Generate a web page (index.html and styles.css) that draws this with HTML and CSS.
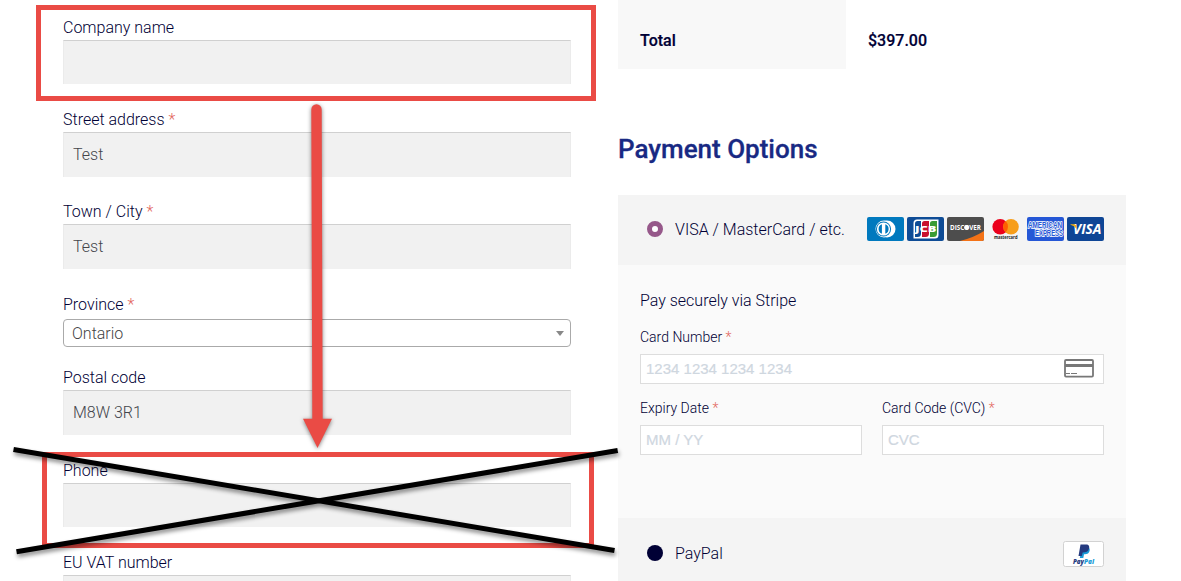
FILE: index.html
```html
<!DOCTYPE html>
<html lang="en">
<head>
<meta charset="utf-8">
<title>Checkout</title>
<link rel="stylesheet" href="styles.css">
</head>
<body>
<main class="checkout">
  <form class="billing">
    <div class="field field--company"><label class="label">Company name</label><input class="input input--short" type="text"></div>
    <div class="field field--street"><label class="label">Street address <span class="req">*</span></label><input class="input" type="text" value="Test"></div>
    <div class="field field--city"><label class="label">Town / City <span class="req">*</span></label><input class="input" type="text" value="Test"></div>
    <div class="field field--province"><label class="label">Province <span class="req">*</span></label><div class="select"><span class="select-value">Ontario</span><i class="select-arrow"></i></div></div>
    <div class="field field--postal"><label class="label">Postal code</label><input class="input" type="text" value="M8W 3R1"></div>
    <div class="field field--phone"><label class="label">Phone</label><input class="input input--short" type="text"></div>
    <div class="field"><label class="label">EU VAT number</label><input class="input" type="text"></div>
  </form>

  <section class="order">
    <div class="total"><div class="total-name">Total</div><div class="total-value">$397.00</div></div>
    <h2 class="heading">Payment Options</h2>
    <div class="method method--card">
      <span class="radio radio--on"></span><span class="method-name">VISA / MasterCard / etc.</span>
      <div class="cards">
        <svg class="card" viewBox="0 0 37 24"><rect width="37" height="24" rx="2" fill="#0079be"/><circle cx="20" cy="12" r="8.500" fill="#fff"/><circle cx="17" cy="12" r="8.500" fill="#fff"/><circle cx="16.500" cy="12" r="7.600" fill="#0079be"/><circle cx="16.500" cy="12" r="6.600" fill="#fff"/><path d="M14.900 7.300a5 5 0 0 0 0 9.400zM18.300 7.300a5 5 0 0 1 0 9.400z" fill="#0079be"/></svg>
        <svg class="card" viewBox="0 0 37 24"><rect width="37" height="24" rx="2" fill="#0e4c96"/><path d="M10 2.500h21.500V18a3.500 3.500 0 0 1-3.500 3.500H6.500V6A3.500 3.500 0 0 1 10 2.500z" fill="#fff"/><path d="M10.500 4h3.500v12.500a3.500 3.500 0 0 1-3.500 3.500H8V6.500A2.500 2.500 0 0 1 10.500 4z" fill="#0e4c96"/><path d="M17.500 4H22v12.500a3.500 3.500 0 0 1-3.500 3.500H15V6.500A2.500 2.500 0 0 1 17.500 4z" fill="#c8102e"/><path d="M25.500 4H30v12.500a3.500 3.500 0 0 1-3.500 3.500H23V6.500A2.500 2.500 0 0 1 25.500 4z" fill="#3a9b35"/><text class="logo" x="8" y="15.300" font-size="9" textLength="21.500" lengthAdjust="spacingAndGlyphs" fill="#fff">JCB</text></svg>
        <svg class="card" viewBox="0 0 37 24"><rect width="37" height="24" rx="2" fill="#4d4d4d"/><path d="M37 14v8a2 2 0 0 1-2 2H13Q27 20.500 37 14z" fill="#f47216"/><text class="logo logo--thin" x="3" y="12.600" font-size="6.200" textLength="31" lengthAdjust="spacingAndGlyphs" fill="#fff">DISCOVER</text><circle cx="19.600" cy="10.400" r="2.400" fill="#fff"/></svg>
        <svg class="card" viewBox="0 0 37 24"><circle cx="13.200" cy="9.700" r="7.800" fill="#eb001b"/><circle cx="24" cy="9.700" r="7.800" fill="#f79e1b"/><path d="M18.600 4.100a7.800 7.800 0 0 1 0 11.200a7.800 7.800 0 0 1 0-11.200z" fill="#ff5f00"/><text class="logo logo--thin" x="7" y="21.800" font-size="4.700" textLength="23.500" lengthAdjust="spacingAndGlyphs" fill="#222">mastercard</text></svg>
        <svg class="card" viewBox="0 0 37 24"><rect width="37" height="24" rx="2" fill="#2557d6"/><g class="amex"><text x="1" y="10.700" textLength="34" lengthAdjust="spacingAndGlyphs">AMERICAN</text><text x="8" y="18.700" textLength="28" lengthAdjust="spacingAndGlyphs">EXPRESS</text></g></svg>
        <svg class="card" viewBox="0 0 37 24"><rect width="37" height="24" rx="2" fill="#0e4595"/><text class="logo logo--thin" x="6" y="17" font-size="14" font-style="italic" textLength="28.500" lengthAdjust="spacingAndGlyphs" fill="#fff">VISA</text><path d="M3.500 7.200h4.300l1.200 1 .8 3.800Q7.500 8.800 3.500 7.700z" fill="#f2ae14"/></svg>
      </div>
    </div>
    <div class="stripe">
      <p class="stripe-intro">Pay securely via Stripe</p>
      <label class="small-label">Card Number <span class="req">*</span></label>
      <div class="stripe-input"><span>1234 1234 1234 1234</span>
        <svg class="generic-card" viewBox="0 0 30 19"><rect x="1" y="1" width="28" height="16.600" rx="1" fill="#fff" stroke="#777" stroke-width="1.800"/><path d="M1 5h28v3H1z" fill="#777"/><path d="M2 14.500h4M7 14.500h6" stroke="#777" stroke-width="1.100"/></svg>
      </div>
      <div class="stripe-row">
        <div><label class="small-label">Expiry Date <span class="req">*</span></label><div class="stripe-input"><span>MM / YY</span></div></div>
        <div><label class="small-label">Card Code (CVC) <span class="req">*</span></label><div class="stripe-input"><span>CVC</span></div></div>
      </div>
    </div>
    <div class="method method--paypal">
      <span class="radio"></span><span class="method-name">PayPal</span>
      <svg class="paypal" viewBox="0 0 41 26"><rect x=".5" y=".5" width="40" height="25" rx="2" fill="#fff" stroke="#d2d2d2"/><path d="M19 6h6c2.500 1 2 4.500.5 6-1.200 1.200-3 1.200-4.500 1.200L20.300 17h-3.500z" fill="#179bd7"/><path d="M17.500 3.500h5.500c3 0 3.700 2 3 4.300-.8 2.800-2.800 3.700-6.300 3.700L18.800 15H15.500z" fill="#253b80"/><g class="paypal-word"><text x="10" y="22.500" textLength="11" lengthAdjust="spacingAndGlyphs" fill="#253b80">Pay</text><text x="21" y="22.500" textLength="10" lengthAdjust="spacingAndGlyphs" fill="#179bd7">Pal</text></g></svg>
    </div>
  </section>
</main>

<svg class="annotations" viewBox="0 0 1181 581">
  <g fill="none" stroke="#ea4b45" stroke-width="5"><rect x="38.500" y="7.500" width="555" height="91"/><rect x="44.500" y="454.500" width="547" height="91"/></g>
  <path class="arrow" d="M311.300 109.500a5.200 5.200 0 0 1 10.400 0L322.700 418.700H332L317.500 448 303 418.700h9.300z"/>
  <g class="cross"><path d="M13.500 449.500 614.500 550.500"/><path d="M16.500 551.700 617.700 450.500"/></g>
</svg>
</body>
</html>
```

FILE: styles.css
```css
* { box-sizing: border-box; }
body {
  margin: 0;
  height: 581px;
  overflow: hidden;
  position: relative;
  background: #fff;
  color: #000035;
  font: 300 16px/26px Roboto, sans-serif;
}
.checkout {
  display: grid;
  grid-template-columns: 508px 508px;
  column-gap: 47px;
  padding-left: 63px;
  height: 581px;
  overflow: hidden;
}
.billing { padding-top: 14px; }
.field { display: flex; flex-direction: column; margin-bottom: 21px; }
.field--company { margin-bottom: 22px; }
.field--city { margin-bottom: 22px; }
.field--province { margin-bottom: 17px; }
.field--postal { margin-bottom: 22px; }
.field--phone { margin-bottom: 22px; }
.label { height: 26px; line-height: 28px; }
.req { color: #e2665c; }
.input {
  height: 45px;
  width: 100%;
  margin: 0;
  padding: 0 9px 2px;
  border: 1px solid #ebebeb;
  border-top-color: #d0d0d0;
  border-bottom: 0;
  border-radius: 0;
  background: #f1f1f1;
  color: #43454b;
  font: inherit;
}
.input--short { height: 44px; }
.select {
  display: flex;
  align-items: center;
  justify-content: space-between;
  height: 28px;
  margin-top: 2px;
  padding: 0 6px 0 8px;
  border: 1px solid #aaa;
  border-radius: 4px;
  color: #444;
}
.select-value { line-height: 24px; padding-top: 2px; }
.select-arrow { border: 4px solid transparent; border-top: 5px solid #888; border-bottom: 0; }

.total { display: flex; height: 69px; font-weight: 500; -webkit-text-stroke: .2px; }
.total-name { width: 228px; padding: 28px 22px 0; background: #f8f8f8; }
.total-value { padding: 28px 22px 0; }
.heading {
  margin: 60px 0 26px;
  color: #182983;
  font-size: 26px;
  line-height: 40px;
  font-weight: 500;
  -webkit-text-stroke: .3px;
}
.method {
  display: flex;
  align-items: center;
  height: 70px;
  padding: 0 22px 0 28px;
  background: #f4f4f4;
}
.method--card { padding-bottom: 2px; }
.method--card .method-name { line-height: 24px; padding-top: 2px; }
.method--paypal { padding-top: 2px; }
.method--paypal .radio { margin-bottom: 2px; }
.radio { width: 16px; height: 16px; margin: 0 12.500px 0 .5px; border-radius: 50%; background: #000035; }
.radio--on { border: 5.500px solid #96588a; background: #fff; }
.cards { display: flex; gap: 3px; margin-left: auto; }
.card { display: block; width: 37px; height: 24px; overflow: visible; }
.logo { font-family: "Open Sans", sans-serif; font-weight: 800; }
.logo--thin { font-weight: 700; }
.amex {
  font: 800 8.500px "Liberation Sans", sans-serif;
  fill: #2557d6;
  stroke: #fff;
  stroke-width: 1.600px;
  paint-order: stroke;
}
.paypal { width: 41px; height: 26px; margin-left: auto; }
.paypal-word { font: italic 800 6px "Open Sans", sans-serif; }

.stripe { height: 253px; padding: 23px 22px 0; background: #fafafa; }
.stripe-intro { margin: 0 0 10px; }
.small-label { display: block; height: 30px; font-size: 14px; }
.stripe-input {
  display: flex;
  align-items: center;
  justify-content: space-between;
  height: 30px;
  padding: 0 9px 2px 5px;
  border: 1px solid #ddd;
  background: #fff;
  color: #cfd7df;
  font: 400 15px "Liberation Sans", sans-serif;
  -webkit-text-stroke: .2px;
}
.generic-card { width: 30px; height: 19px; }
.stripe-row { display: grid; grid-template-columns: 1fr 1fr; gap: 20px; margin-top: 11px; }

/* Markup drawn over the form */
.annotations { position: absolute; inset: 0; width: 1181px; height: 581px; pointer-events: none; }
.arrow { fill: #ea4b45; filter: drop-shadow(0 1px 2px rgba(0, 0, 0, .5)); }
.cross { fill: none; stroke: #000; stroke-width: 5px; filter: drop-shadow(1px 3px 2px rgba(0, 0, 0, .45)); }
```
